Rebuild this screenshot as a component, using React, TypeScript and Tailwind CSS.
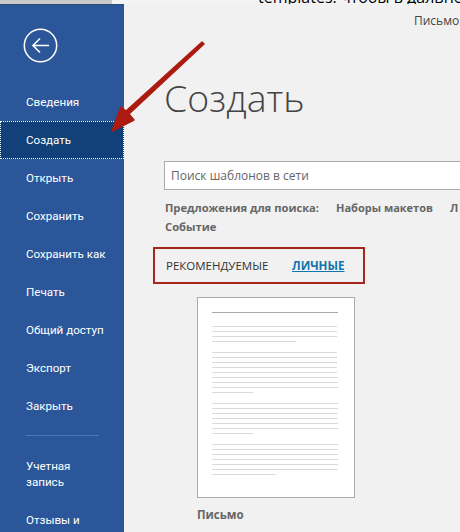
const FONT = "font-['Open_Sans','Noto_Sans',sans-serif]";

const MENU_TOP = ["Сведения", "Создать", "Открыть", "Сохранить", "Сохранить как", "Печать", "Общий доступ", "Экспорт", "Закрыть"];

// thumbnail line groups: widths in px, gap comes from the wrapper
const GROUPS = [
  [125, 125, 125, 84],
  [125, 125, 125, 125, 125, 126, 126, 126, 41],
  [126, 126, 126, 126, 126, 126, 41],
  [126, 126, 126, 126, 126, 126, 64],
];

function Sidebar() {
  return (
    <aside className="w-[124px] shrink-0 bg-[#2b579a] text-white h-[528px] overflow-hidden">
      <div className="pt-[24px] pl-[23px] pb-[20px]">
        <svg width="35" height="35" viewBox="0 0 35 35" fill="none" stroke="white" className="block">
          <circle cx="17.5" cy="17.5" r="16.2" strokeWidth="1.5" />
          <path d="M10 17.5H26M17 10.5L10 17.5L17 24.5" strokeWidth="1.6" />
        </svg>
      </div>
      <nav className="font-['Roboto',sans-serif] text-[11.6px] leading-[16px] flex flex-col">
        {MENU_TOP.map((item) => (
          <div
            key={item}
            className={
              item === "Создать"
                ? "h-[38px] flex items-center pl-[25px] bg-[#124078] border border-dotted border-white"
                : "h-[38px] flex items-center pl-[26px]"
            }
          >
            {item}
          </div>
        ))}
      </nav>
      <div className="h-px w-[73px] ml-[26px] mt-[10px] bg-[#4a76b8]" />
      <div className="font-['Roboto',sans-serif] text-[11.6px] leading-[16px] pl-[26px] mt-[22px]">
        <p>Учетная</p>
        <p>запись</p>
        <p className="mt-[22px] whitespace-nowrap">Отзывы и</p>
      </div>
    </aside>
  );
}

function Thumbnail() {
  return (
    <div className="ml-[73px] mt-[13px] w-[158px] h-[201px] bg-white border border-[#ababab] pt-[14px] pl-[14px] pr-[16px]">
      <div className="h-px bg-[#a8a8a8] mb-[13px]" />
      <div className="flex flex-col gap-[10px]">
        {GROUPS.map((g, i) => (
          <div key={i} className="flex flex-col gap-[4px]">
            {g.map((w, j) => (
              <div key={j} className="h-px bg-[#dadada]" style={{ width: w }} />
            ))}
          </div>
        ))}
      </div>
    </div>
  );
}

function Main() {
  return (
    <main className="flex-1 min-w-0 bg-[#f1f1f1] h-[528px] overflow-hidden relative">
      <p className="pl-[290px] text-[12px] leading-[14px] text-[#444444] pt-[10px] whitespace-nowrap">Письмо.</p>
      <h1 className="ml-[40px] mt-[44px] text-[37.5px] leading-[52px] font-light text-[#444444] whitespace-nowrap">Создать</h1>
      <div className="ml-[40px] mt-[37px] h-[29px] bg-white border border-[#ababab] flex items-center pl-[6px] text-[12px] text-[#666666] -mr-[10px]">
        Поиск шаблонов в сети
      </div>
      <div className="ml-[41px] mt-[8px] text-[11.2px] leading-[19px] font-bold text-[#666666] whitespace-nowrap">
        <p className="flex">
          <span className="w-[171px]">Предложения для поиска:</span>
          <span className="w-[114px] text-[11px]">Наборы макетов</span>
          <span>Л</span>
        </p>
        <p>Событие</p>
      </div>
      <div className="ml-[29px] mt-[11px] w-[212px] h-[37px] border-[2px] border-[#a5261c] flex items-center pl-[11px] whitespace-nowrap">
        <span className="text-[#333333] w-[126px] text-[11.5px]">РЕКОМЕНДУЕМЫЕ</span>
        <span className="font-bold text-[#0f75ad] underline text-[11.6px]">ЛИЧНЫЕ</span>
      </div>
      <Thumbnail />
      <p className="ml-[73px] mt-[8px] text-[11.5px] font-bold text-[#666666]">Письмо</p>
    </main>
  );
}

export default function App() {
  return (
    <div className={`w-[460px] h-[532px] overflow-hidden relative bg-[#f1f1f1] ${FONT}`}>
      <div className="h-[5px] overflow-hidden bg-[#f4f4f4] border-b border-[#2d4a75] relative">
        <div className="h-full w-[112px] bg-[#c9c9c9]" />
        <p className="absolute left-[258px] -top-[13px] text-[16px] leading-[20px] text-black whitespace-nowrap">templates. чтобы в дальнейшем</p>
      </div>
      <div className="flex -mt-px">
        <Sidebar />
        <Main />
      </div>
      <svg className="absolute left-[105px] top-[36px]" width="105" height="100" viewBox="0 0 105 100" fill="none">
        <path d="M99 8L24 78L29 84L7 95L16 71L21 75L97 6Z" fill="#ad1a10" stroke="#ad1a10" strokeWidth="1.5" strokeLinejoin="round" />
      </svg>
    </div>
  );
}
